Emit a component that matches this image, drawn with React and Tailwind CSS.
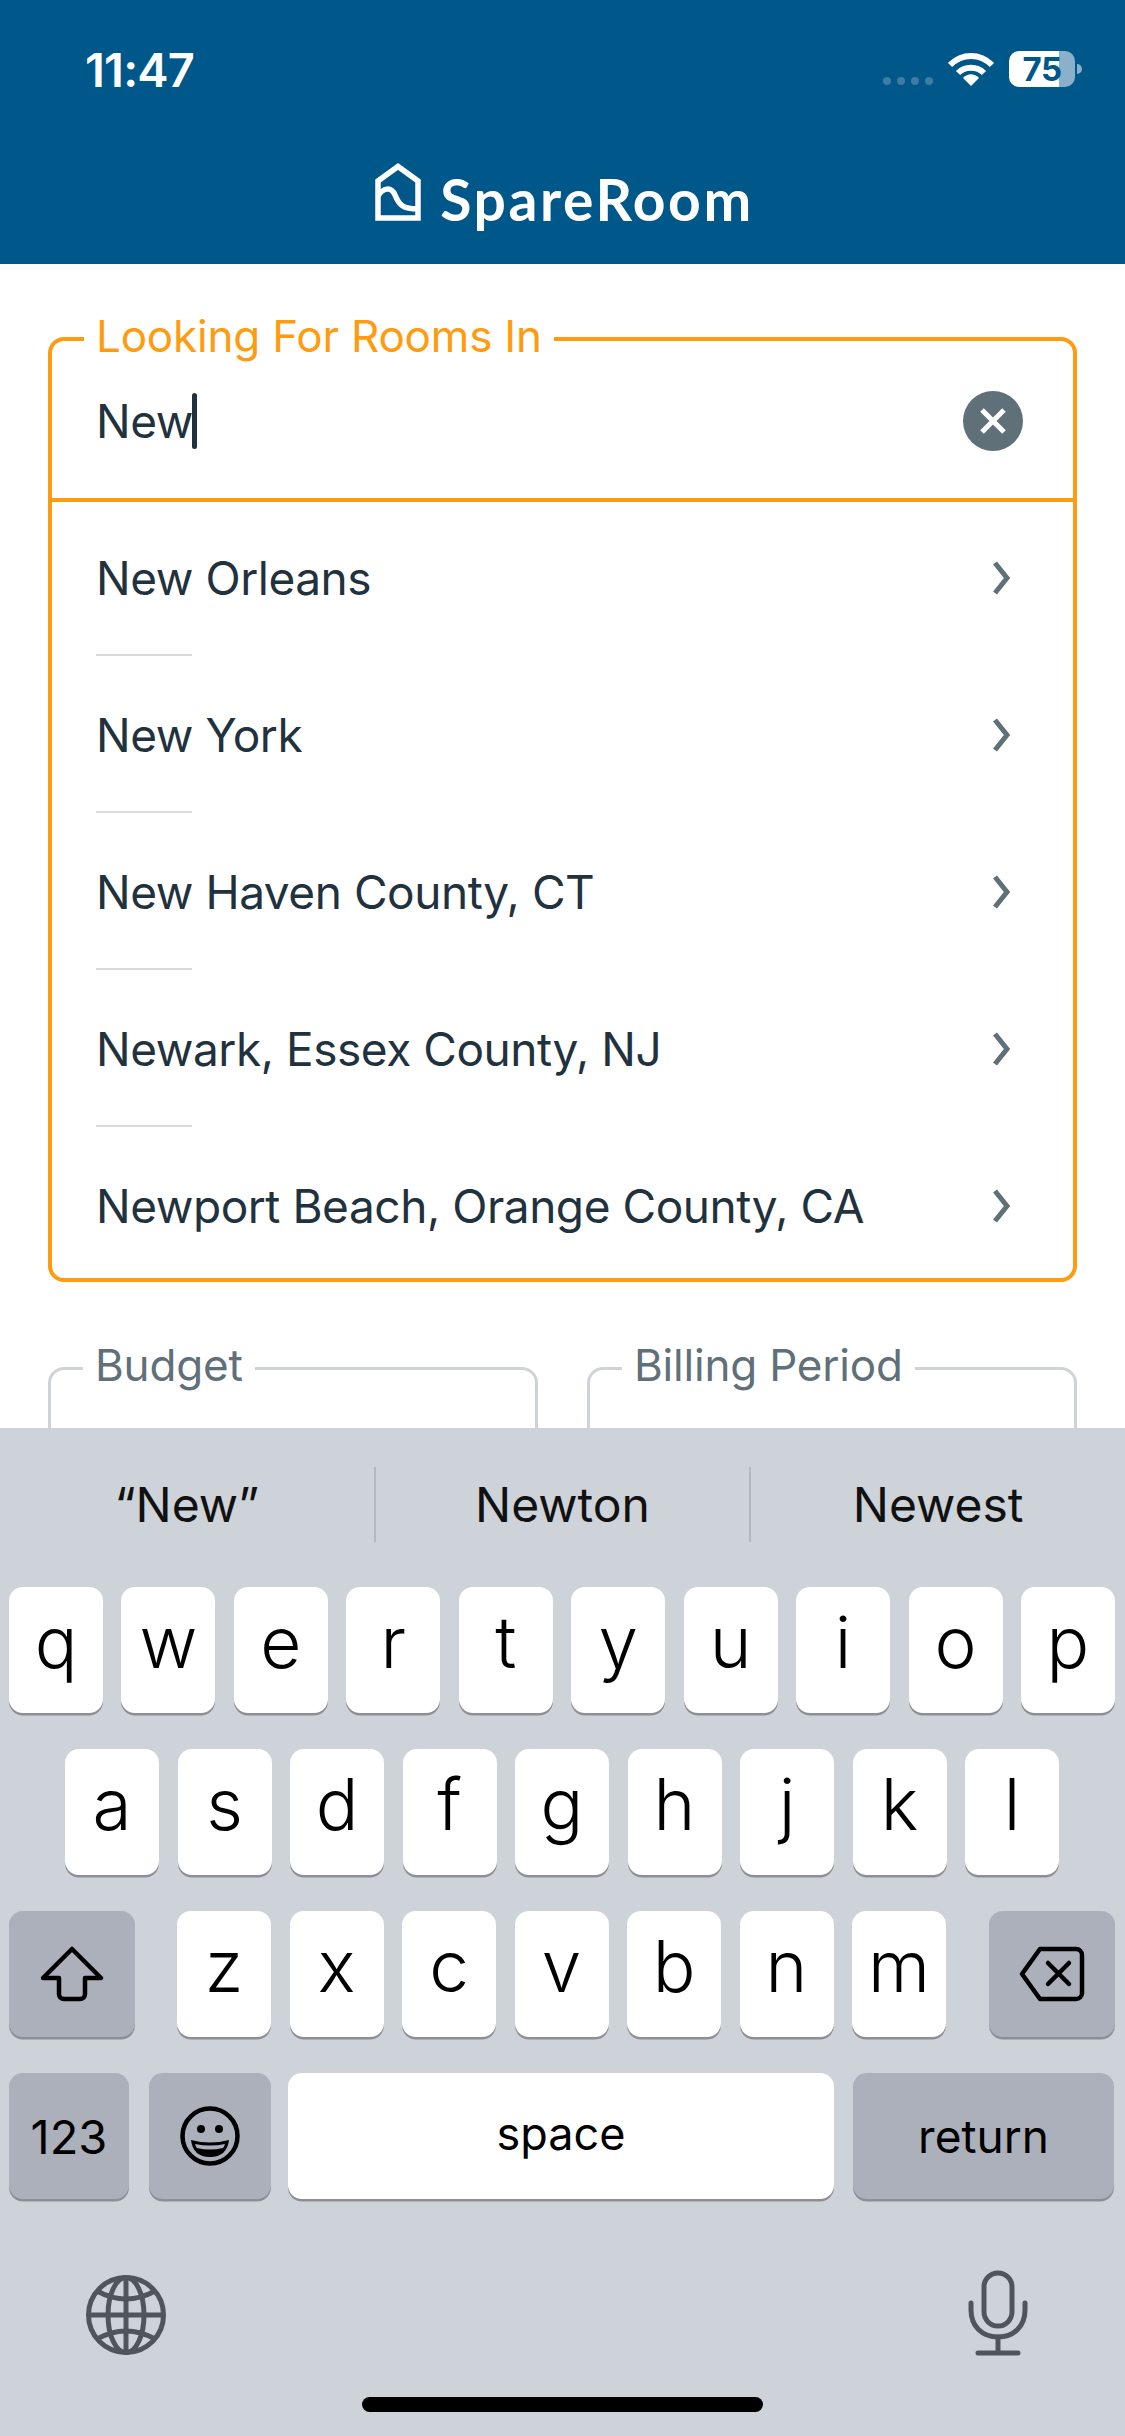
const SUGGESTIONS = [
  "New Orleans",
  "New York",
  "New Haven County, CT",
  "Newark, Essex County, NJ",
  "Newport Beach, Orange County, CA",
];

const ROW_ONE = ["q", "w", "e", "r", "t", "y", "u", "i", "o", "p"];
const ROW_TWO = ["a", "s", "d", "f", "g", "h", "j", "k", "l"];
const ROW_THREE = ["z", "x", "c", "v", "b", "n", "m"];

function StatusBar() {
  return (
    <div className="flex h-[140px] items-start justify-between pl-[85px] pr-[43px] pt-[40px] text-white">
      <span className="text-[47px] font-semibold leading-[60px] tracking-[-0.8px]">11:47</span>
      <div className="flex items-center pt-[11px]">
        <div className="mr-[15px] mt-[23px] flex gap-[6px]">
          <span className="h-[8px] w-[8px] rounded-full bg-[#3f7ba3]" />
          <span className="h-[8px] w-[8px] rounded-full bg-[#3f7ba3]" />
          <span className="h-[8px] w-[8px] rounded-full bg-[#3f7ba3]" />
          <span className="h-[8px] w-[8px] rounded-full bg-[#3f7ba3]" />
        </div>
        <svg width="46" height="33" viewBox="0 0 46 33" fill="none" stroke="white" strokeWidth="6">
          <path d="M2 12 C14 0 32 0 44 12" />
          <path d="M10 20 C17 13 29 13 36 20" />
          <path d="M15 25 L23 33 L31 25 C26 20 20 20 15 25Z" fill="white" stroke="none" />
        </svg>
        <div className="ml-[15px] flex h-[36px] w-[66px] items-center justify-center rounded-[10px] bg-[linear-gradient(90deg,#fff_76%,#8ab0cb_76%)] text-[33px] font-bold leading-none tracking-[-0.5px] text-[#00578a]">
          75
        </div>
        <span className="ml-[2px] h-[10px] w-[5px] rounded-r-full bg-[#8ab0cb]" />
      </div>
    </div>
  );
}

function Logo() {
  return (
    <div className="flex h-[124px] items-start justify-center pl-[4px] pt-[23px]">
      <svg width="46" height="58" viewBox="0 0 46 58" fill="none" stroke="white" strokeWidth="5.5">
        <path d="M3 55 V18 L23 3.5 L43 18 V55 Z" />
        <path d="M3 33 C8 25 16 23 20 32 C24 42 28 46 43 46" />
      </svg>
      <span className="ml-[19px] mt-[3px] font-['Lato',sans-serif] text-[57px] font-bold leading-[66px] tracking-[2.6px] text-white">
        SpareRoom
      </span>
    </div>
  );
}

function SuggestionRow({ label }) {
  return (
    <li className="pt-[51px] first:pt-[48px] [&:last-child>hr]:hidden">
      <div className="flex h-[56px] items-center justify-between pl-[44px] pr-[61px]">
        <span className="text-[46px] leading-[56px] tracking-[-0.45px] text-[#1f323e]">{label}</span>
        <svg width="20" height="36" viewBox="0 0 20 36" fill="none" stroke="#5f7079" strokeWidth="5">
          <path d="M3 3 L15 18 L3 33" />
        </svg>
      </div>
      <hr className="ml-[44px] mt-[48px] h-[2px] w-[96px] border-0 bg-[#d8dbdd]" />
    </li>
  );
}

function SearchField() {
  return (
    <fieldset className="rounded-[16px] border-4 border-[#ff9b0f]">
      <legend className="ml-[32px] px-[12px] pb-[6px] text-[44px] leading-[54px] tracking-[-0.2px] text-[#ff9b0f]">
        Looking For Rooms In
      </legend>
      <div className="flex h-[133px] items-start justify-between border-b-4 border-[#ff9b0f] pl-[44px] pr-[50px] pt-[22px]">
        <div className="flex h-[60px] items-center">
          <span className="text-[46px] leading-[56px] tracking-[-0.45px] text-[#1f323e]">New</span>
          <span className="ml-[-1px] h-[56px] w-[5px] rounded-full bg-[#1f323e]" />
        </div>
        <button className="flex h-[60px] w-[60px] items-center justify-center rounded-full bg-[#5f7079]">
          <svg width="26" height="26" viewBox="0 0 26 26" stroke="white" strokeWidth="5">
            <path d="M2 2 L24 24 M24 2 L2 24" />
          </svg>
        </button>
      </div>
      <ul className="pb-[44px]">
        {SUGGESTIONS.map((label) => (
          <SuggestionRow key={label} label={label} />
        ))}
      </ul>
    </fieldset>
  );
}

function ClosedField({ label }) {
  return (
    <fieldset className="h-[200px] flex-1 rounded-[16px] border-[3px] border-[#d0d3d5]">
      <legend className="ml-[32px] px-[12px] pb-[6px] text-[44px] leading-[54px] tracking-[-0.2px] text-[#5f7079]">
        {label}
      </legend>
    </fieldset>
  );
}

function Key({ children, wide, dark, className = "" }) {
  return (
    <div
      className={`flex h-[126px] items-center justify-center rounded-[14px] shadow-[0_2.5px_0_#8c8f95] ${
        dark ? "bg-[#abb0bb]" : "bg-white"
      } ${wide ? "" : "w-[94px]"} ${className}`}
    >
      {children}
    </div>
  );
}

function LetterKey({ letter }) {
  return (
    <Key>
      <span className="pb-[15px] text-[71px] font-light leading-none text-black">{letter}</span>
    </Key>
  );
}

function ShiftIcon() {
  return (
    <svg width="64" height="56" viewBox="0 0 64 56" fill="none" stroke="black" strokeWidth="4.5" strokeLinejoin="round">
      <path d="M32 3 L61 32 H45 V48 a5 5 0 0 1 -5 5 H24 a5 5 0 0 1 -5 -5 V32 H3 Z" />
    </svg>
  );
}

function DeleteIcon() {
  return (
    <svg width="66" height="56" viewBox="0 0 66 56" fill="none" stroke="black" strokeWidth="4.5" strokeLinejoin="round" strokeLinecap="round">
      <path d="M21 3 H57 a6 6 0 0 1 6 6 V47 a6 6 0 0 1 -6 6 H21 L3 28 Z" />
      <path d="M29 17 L50 38 M50 17 L29 38" />
    </svg>
  );
}

function SmileyIcon() {
  return (
    <svg width="60" height="60" viewBox="-30 -30 60 60">
      <circle r="27.5" fill="none" stroke="black" strokeWidth="4.5" />
      <circle cx="-9" cy="-7" r="4" fill="black" />
      <circle cx="9" cy="-7" r="4" fill="black" />
      <path d="M-19 4 Q0 9 19 4 Q17 21 0 21 Q-17 21 -19 4Z" fill="black" />
      <path d="M-15 8 Q0 11 15 8 Q14 11 13 12 Q0 15 -13 12 Q-14 11 -15 8Z" fill="#abb0bb" />
    </svg>
  );
}

function GlobeIcon() {
  return (
    <svg width="80" height="80" viewBox="0 0 80 80" fill="none" stroke="#50555c" strokeWidth="5">
      <circle cx="40" cy="40" r="37.5" />
      <ellipse cx="40" cy="40" rx="18" ry="37.5" />
      <path d="M40 3 V77 M3 40 H77" />
      <path d="M11 16 Q40 32 69 16 M11 64 Q40 48 69 64" />
    </svg>
  );
}

function MicIcon() {
  return (
    <svg className="-mt-[5px]" width="60" height="86" viewBox="0 0 60 86" fill="none" stroke="#50555c" strokeWidth="5" strokeLinecap="round">
      <rect x="16" y="3" width="28" height="53" rx="14" />
      <path d="M3 33 V40 C3 56 14 67 30 67 C46 67 57 56 57 40 V33" />
      <path d="M30 67 V83 M10 83 H50" />
    </svg>
  );
}

function Keyboard() {
  return (
    <div className="flex h-[1008px] flex-col bg-[#ced2d9]">
      <div className="flex h-[159px] items-start pt-[39px] text-[48px] leading-[75px] text-[#111]">
        <span className="flex-1 text-center">“New”</span>
        <span className="h-[75px] w-[2px] bg-[#b4b8bf]" />
        <span className="flex-1 text-center">Newton</span>
        <span className="h-[75px] w-[2px] bg-[#b4b8bf]" />
        <span className="flex-1 text-center">Newest</span>
      </div>

      <div className="flex flex-col gap-[36px]">
        <div className="flex justify-between pl-[9px] pr-[10px]">
          {ROW_ONE.map((letter) => (
            <LetterKey key={letter} letter={letter} />
          ))}
        </div>
        <div className="flex gap-[18.5px] pl-[65px]">
          {ROW_TWO.map((letter) => (
            <LetterKey key={letter} letter={letter} />
          ))}
        </div>
        <div className="flex items-center pl-[9px]">
          <Key wide dark className="w-[126px]">
            <ShiftIcon />
          </Key>
          <div className="ml-[42px] flex gap-[18.5px]">
            {ROW_THREE.map((letter) => (
              <LetterKey key={letter} letter={letter} />
            ))}
          </div>
          <Key wide dark className="ml-[43px] w-[126px]">
            <DeleteIcon />
          </Key>
        </div>
        <div className="flex pl-[9px]">
          <Key wide dark className="w-[120px]">
            <span className="text-[47px] leading-none text-black">123</span>
          </Key>
          <Key wide dark className="ml-[20px] w-[122px]">
            <SmileyIcon />
          </Key>
          <Key wide className="ml-[17px] w-[546px]">
            <span className="pb-[6px] text-[45px] leading-none text-black">space</span>
          </Key>
          <Key wide dark className="ml-[19px] w-[261px]">
            <span className="text-[46px] leading-none text-black">return</span>
          </Key>
        </div>
      </div>

      <div className="flex flex-1 items-start justify-between pl-[86px] pr-[97px] pt-[76px]">
        <GlobeIcon />
        <MicIcon />
      </div>
      <div className="flex justify-center pb-[24px]">
        <div className="h-[15px] w-[401px] rounded-full bg-black" />
      </div>
    </div>
  );
}

export default function App() {
  return (
    <div className="flex h-[2436px] w-[1125px] flex-col overflow-hidden bg-white font-['Inter',sans-serif]">
      <header className="h-[264px] shrink-0 bg-[#00578a]">
        <StatusBar />
        <Logo />
      </header>
      <main className="min-h-0 flex-1 overflow-hidden px-[48px] pt-[45px]">
        <SearchField />
        <div className="mt-[56px] flex gap-[49px]">
          <ClosedField label="Budget" />
          <ClosedField label="Billing Period" />
        </div>
      </main>
      <Keyboard />
    </div>
  );
}
